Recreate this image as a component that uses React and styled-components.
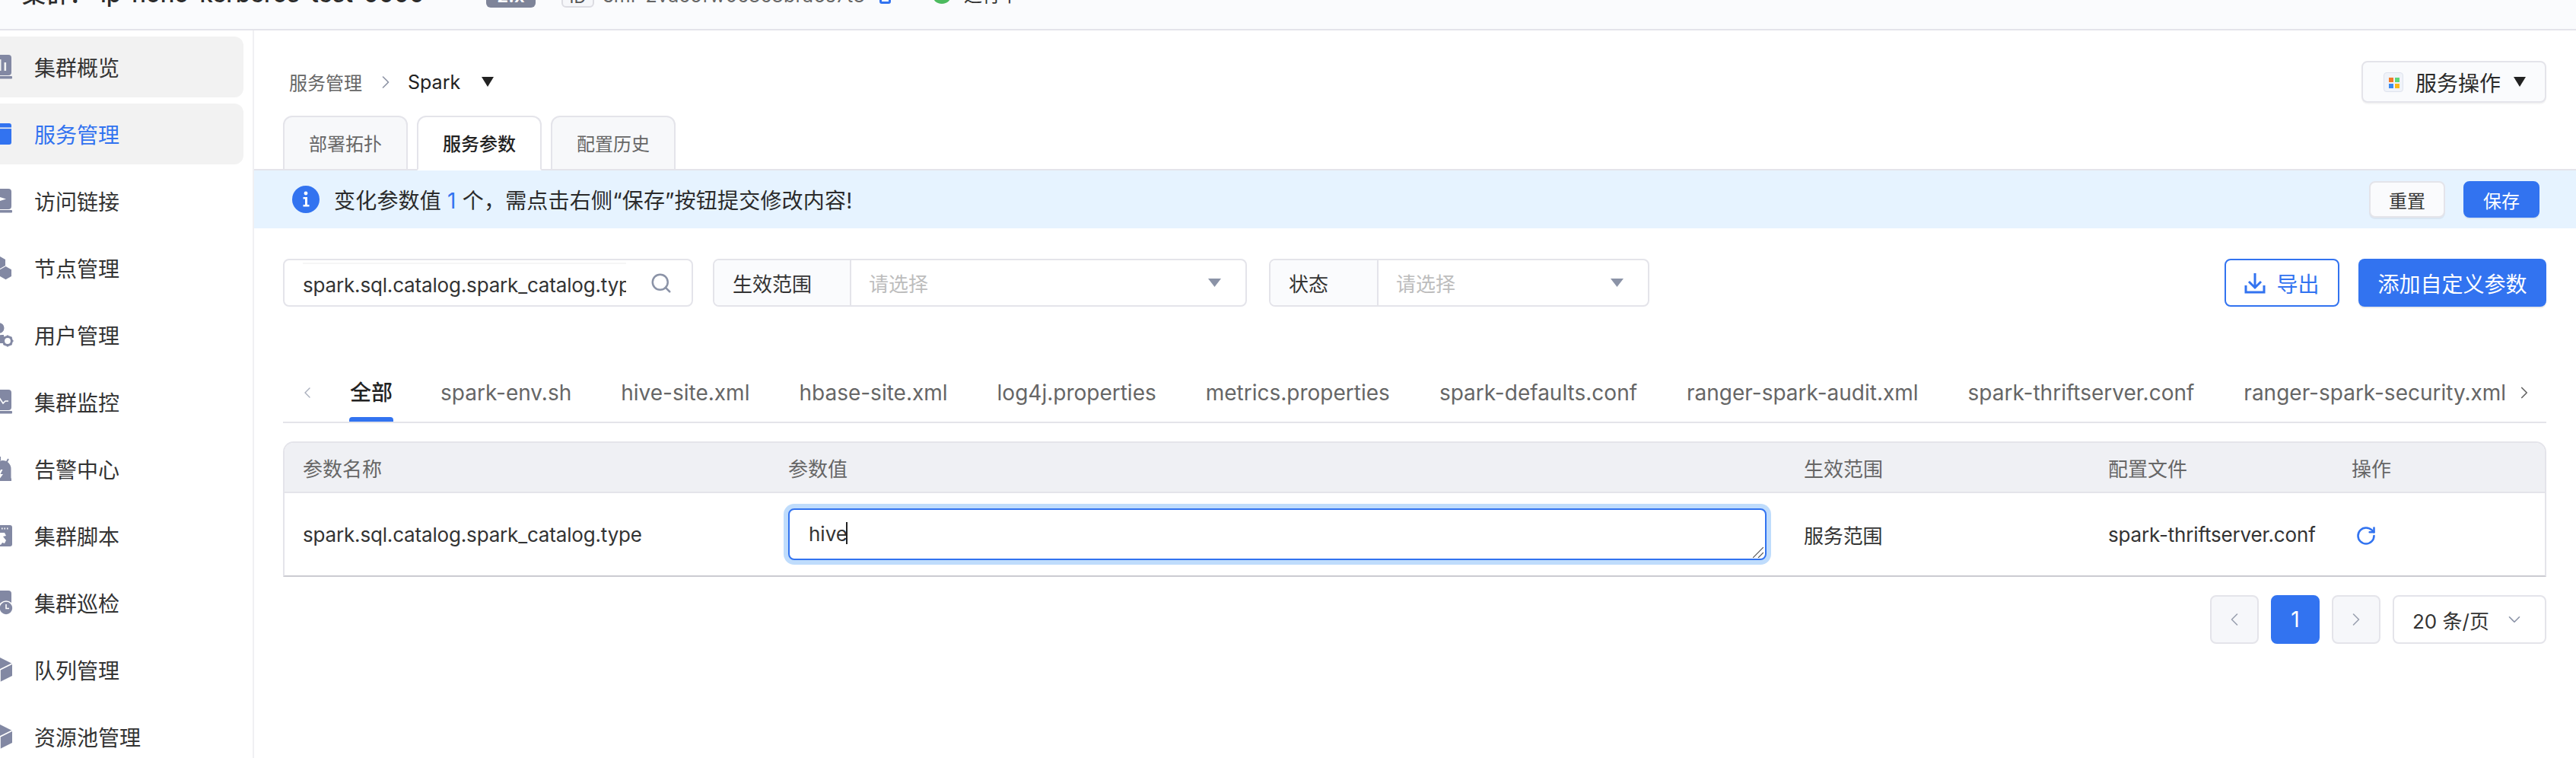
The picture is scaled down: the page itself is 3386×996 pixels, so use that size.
import React from 'react';
import styled, { createGlobalStyle } from 'styled-components';
import { ChevronLeft, ChevronRight, ChevronDown, Search, RotateCw } from 'lucide-react';

const Global = createGlobalStyle`
  html, body { margin: 0; padding: 0; background: #fff; }
  body { font-family: Inter, "Noto Sans CJK SC", sans-serif; color: #333; }
  * { box-sizing: border-box; }
`;

const BLUE = '#3273f0';
const LINE = '#e4e4ea';
const ICON = '#8288a3';

const Page = styled.div`
  width: 3386px; height: 996px; overflow: hidden;
  display: flex; flex-direction: column;
`;
const Header = styled.header`
  flex: none; height: 40px; background: #fafbfd; border-bottom: 2px solid ${LINE};
  display: flex; align-items: flex-end; overflow: hidden; padding-left: 29px;
`;
const Title = styled.div`
  font-size: 31px; font-weight: 500; line-height: 40px; color: #2b2b2b; white-space: nowrap;
  margin-bottom: 26px; width: 610px; flex: none;
`;
const TitleName = styled.span` margin-left: 10px; `;
const VersionTag = styled.div`
  flex: none; width: 65px; height: 40px; background: #7e8499; border-radius: 6px; color: #fff;
  font-size: 24px; font-weight: 600; margin-bottom: 28px;
  display: flex; align-items: flex-end; justify-content: center;
`;
const VersionText = styled.span` line-height: 24px; margin-bottom: 3px; `;
const IdBox = styled.div`
  flex: none; width: 43px; height: 40px; margin-left: 34px; margin-bottom: 28px;
  background: #f6f7fa; border: 2px solid #dcdce2; border-radius: 6px; font-size: 22px;
  display: flex; align-items: flex-end; justify-content: center; color: #555;
`;
const IdLabel = styled.span` line-height: 22px; margin-bottom: 1px; `;
const IdText = styled.div`
  flex: none; width: 345px; margin-left: 11px; margin-bottom: 29px; white-space: nowrap;
  font-size: 25px; line-height: 30px; color: #666; letter-spacing: 0.25px;
`;
const CopyIcon = styled.svg` flex: none; margin-left: 19px; margin-bottom: 33px; `;
const StatusDot = styled.div`
  flex: none; width: 26px; height: 26px; margin-left: 54px; margin-bottom: 33px;
  border-radius: 50%; background: #4cbb5f;
`;
const StatusText = styled.div`
  flex: none; margin-left: 16px; margin-bottom: 29px; font-size: 24px; line-height: 30px; color: #333;
`;

const Body = styled.div` flex: 1; min-height: 0; display: flex; `;
const Sidebar = styled.nav`
  flex: none; width: 334px; border-right: 2px solid #f0f0f3; padding-top: 8px; overflow: hidden;
  display: flex; flex-direction: column; gap: 8px;
`;
const MenuItem = styled.div`
  flex: none; width: 320px; height: 80px; border-radius: 0 12px 12px 0;
  background: ${p => (p.$tinted ? '#f2f2f2' : 'transparent')};
  color: ${p => (p.$active ? BLUE : '#333')};
  display: flex; align-items: center; gap: 29px;
  font-size: 28px; white-space: nowrap;
`;
const MenuGlyph = styled.svg` flex: none; margin-left: -16px; overflow: visible; `;

const Main = styled.main` flex: 1; min-width: 0; display: flex; flex-direction: column; `;
const TopRow = styled.div`
  flex: none; margin-top: 40px; height: 55px; padding: 0 39px 0 46px;
  display: flex; align-items: center; justify-content: space-between;
`;
const Crumbs = styled.div` display: flex; align-items: center; font-size: 24px; `;
const CrumbLink = styled.span` color: #666; `;
const CrumbChevron = styled.span` display: flex; color: #8f95a6; margin-left: 17px; `;
const CrumbCurrent = styled.span` color: #222; margin-left: 15px; font-size: 25px; `;
const Triangle = styled.svg` flex: none; display: block; margin-left: ${p => p.$ml || 0}px; `;
const OpsButton = styled.div`
  width: 243px; height: 55px; padding-left: 27px; background: #fafbfd; border: 2px solid ${LINE};
  border-radius: 8px; box-shadow: 0 2px 0 rgba(0,0,0,.04); display: flex; align-items: center;
  font-size: 28px; color: #2b2b2b;
`;
const OpsTile = styled.span`
  width: 26px; height: 26px; padding: 6px; background: #f0f3f9; border: 1px solid #dfe3ee; border-radius: 4px;
  display: grid; grid-template-columns: 6px 6px; grid-template-rows: 6px 6px; gap: 2px; flex: none;
  margin-right: 16px;
`;
const OpsDot = styled.i` display: block; background: ${p => p.$c}; `;

const TabBar = styled.div`
  flex: none; margin-top: 17px; height: 72px; padding-left: 38px; display: flex; gap: 12px;
  border-bottom: 2px solid ${LINE};
`;
const Tab = styled.div`
  width: 164px; height: 72px; border: 2px solid ${LINE}; border-radius: 12px 12px 0 0;
  background: ${p => (p.$active ? '#fff' : '#f7f8fa')};
  border-bottom-color: ${p => (p.$active ? '#fff' : LINE)};
  color: ${p => (p.$active ? '#222' : '#666')};
  font-size: 24px; font-weight: ${p => (p.$active ? 500 : 400)};
  display: flex; align-items: center; justify-content: center; padding-bottom: 2px;
`;
const Banner = styled.div`
  flex: none; height: 76px; background: #e6f3ff; padding: 0 48px 0 50px;
  display: flex; align-items: center; font-size: 28px; color: #2b2b2b;
`;
const BannerText = styled.div` margin-left: 19px; flex: 1; letter-spacing: 0.2px; `;
const Count = styled.span` color: ${BLUE}; `;
const SmallButton = styled.div`
  width: 100px; height: 48px; margin-left: 24px; border-radius: 8px; font-size: 24px;
  display: flex; align-items: center; justify-content: center;
  background: ${p => (p.$primary ? BLUE : '#fafbfd')};
  color: ${p => (p.$primary ? '#fff' : '#333')};
  border: 2px solid ${p => (p.$primary ? BLUE : LINE)};
  box-shadow: 0 2px 0 rgba(0,0,0,.05);
`;

const Filters = styled.div`
  flex: none; margin-top: 40px; height: 63px; padding: 0 39px 0 38px; display: flex; align-items: stretch;
`;
const SearchBox = styled.div`
  width: 539px; border: 2px solid ${LINE}; border-radius: 8px; display: flex; align-items: flex-start;
  padding-left: 24px;
`;
const SearchInput = styled.input`
  width: 425px; height: 56px; margin-top: 3px; border: 0; border-top: 2px solid #f6f6f6; padding: 0; outline: none;
  font: 26px Inter, "Noto Sans CJK SC", sans-serif; letter-spacing: -0.17px; color: #333; background: transparent;
`;
const SearchIconWrap = styled.span`
  margin-left: 31px; align-self: center; color: #8b93a7; display: flex;
`;
const SelectBox = styled.div`
  width: ${p => p.$w}px; margin-left: ${p => p.$ml}px; border: 2px solid ${LINE}; border-radius: 8px;
  display: flex; align-items: center; font-size: 26px; padding-right: 32px;
`;
const SelectLabel = styled.div`
  width: ${p => p.$w}px; height: 100%; background: #fafbfd; border-right: 2px solid ${LINE};
  border-radius: 6px 0 0 6px; padding-left: 24px; display: flex; align-items: center; color: #333; flex: none;
`;
const Placeholder = styled.div` flex: 1; padding-left: 23px; color: #bdbdbd; `;
const OutlineButton = styled.div`
  width: 151px; margin-left: auto; border: 2px solid ${BLUE}; border-radius: 8px; color: ${BLUE};
  display: flex; align-items: center; justify-content: center; gap: 14px; font-size: 28px;
`;
const PrimaryButton = styled.div`
  width: 247px; margin-left: 25px; background: ${BLUE}; border-radius: 8px; color: #fff;
  display: flex; align-items: center; justify-content: center; font-size: 28px;
  box-shadow: 0 2px 0 rgba(0,0,0,.08);
`;

const FileTabs = styled.div`
  flex: none; margin: 73px 39px 0 38px; height: 80px; border-bottom: 2px solid ${LINE};
  display: flex; align-items: flex-start; padding: 20px 16px 0 20px;
`;
const FileChevron = styled.span`
  flex: none; display: flex; height: 40px; align-items: center; color: ${p => p.$c};
  margin-left: ${p => p.$ml || '0'}; margin-right: ${p => p.$mr || '0'};
`;
const FileTabList = styled.div` display: flex; gap: 65px; `;
const FileTab = styled.div`
  height: 58px; line-height: 40px; font-size: 28px; white-space: nowrap; position: relative;
  margin-right: ${p => (p.$active ? '-2px' : '0')};
  color: ${p => (p.$active ? '#222' : '#666')}; font-weight: ${p => (p.$active ? 500 : 400)};
  ${p => p.$active && `
    &::after { content: ""; position: absolute; left: -1px; right: -1px; bottom: 0; height: 6px;
      background: ${BLUE}; border-radius: 4px 4px 0 0; }
  `}
`;

const Table = styled.div`
  flex: none; margin: 24px 39px 0 38px; border: 2px solid ${LINE}; border-bottom: 2px solid #cbcbd1; border-radius: 14px 14px 0 0;
`;
const TableRow = styled.div`
  display: grid; grid-template-columns: 638px 1335px 400px 320px 1fr; align-items: center; padding-left: 24px;
`;
const HeadRow = styled(TableRow)`
  height: 66px; background: #eff0f4; border-bottom: 2px solid ${LINE}; color: #666; border-radius: 12px 12px 0 0;
  font-size: 26px;
`;
const DataRow = styled(TableRow)` height: 108px; font-size: 26px; color: #333; letter-spacing: -0.17px; `;
const ValueWrap = styled.div` position: relative; width: 1286px; height: 68px; `;
const ValueInput = styled.textarea`
  display: block; width: 1286px; height: 68px; border: 2px solid ${BLUE}; border-radius: 8px;
  box-shadow: 0 0 0 6px #bfdcfc; padding: 17px 25px; outline: none; resize: none;
  font: 26px/30px Inter, "Noto Sans CJK SC", sans-serif; color: #333; background: #fff; caret-color: transparent;
`;
const Caret = styled.i` position: absolute; left: 76px; top: 18px; width: 2px; height: 29px; background: #222; `;
const ResizeGrip = styled.svg` position: absolute; right: 4px; bottom: 3px; `;
const RefreshWrap = styled.span` color: ${BLUE}; display: flex; margin-left: 5px; margin-top: 3px; `;

const Pager = styled.div`
  flex: none; margin: 24px 39px 0 0; height: 64px; display: flex; justify-content: flex-end; gap: 16px;
`;
const PageBtn = styled.div`
  width: 64px; border-radius: 8px; display: flex; align-items: center; justify-content: center; font-size: 28px;
  background: ${p => (p.$current ? BLUE : '#f6f7fa')};
  color: ${p => (p.$current ? '#fff' : '#9aa0b0')};
  border: 2px solid ${p => (p.$current ? BLUE : LINE)};
`;
const PageSize = styled.div`
  width: 202px; border: 2px solid ${LINE}; border-radius: 8px; display: flex; align-items: center;
  justify-content: space-between; padding: 0 27px 0 24px; font-size: 26px; color: #333;
`;
const SizeChevron = styled.span` color: #8b93a7; display: flex; `;

const Screen = ({ children }) => (
  <>
    <rect x="0" y="0" width="31" height="27" rx="4" fill={ICON} />
    <rect x="0" y="28" width="32" height="3.5" rx="1" fill={ICON} />
    {children}
  </>
);

const icons = {
  overview: (
    <Screen>
      <rect x="14.5" y="6" width="3" height="15" fill="#f2f2f2" />
      <rect x="21.5" y="10" width="2.6" height="11" fill="#f2f2f2" />
    </Screen>
  ),
  service: (
    <>
      <rect x="0" y="2" width="31" height="28" rx="3" fill={BLUE} />
      <rect x="0" y="7.5" width="31" height="1.6" fill="#f2f2f2" />
    </>
  ),
  link: (
    <Screen>
      <path d="M9 9 L24 13.5 L9 18 Z" fill="#fff" />
    </Screen>
  ),
  nodes: (
    <>
      <path d="M16 -7 L23 -3 L23 5 L16 9 L9 5 L9 -3 Z" transform="translate(0 8)" fill={ICON} />
      <path d="M23.5 14 L31 18.3 L31 27 L23.5 31.3 L16 27 L16 18.3 Z" fill={ICON} />
      <path d="M8 14 L15 18.3 L15 27 L8 31.3 L1 27 L1 18.3 Z" fill={ICON} />
    </>
  ),
  users: (
    <>
      <circle cx="14.5" cy="7" r="7" fill={ICON} />
      <path d="M0 27 C0 20 8 16 21 16 L21 27 Z" fill={ICON} />
      <circle cx="26" cy="24" r="5.4" fill="none" stroke={ICON} strokeWidth="3" />
      <path d="M26 16.5 V18 M26 30 V31.5 M18.5 24 H20 M32 24 H33.5 M20.7 18.7 L21.8 19.8 M30.2 28.2 L31.3 29.3 M31.3 18.7 L30.2 19.8 M21.8 28.2 L20.7 29.3" stroke={ICON} strokeWidth="2.2" />
    </>
  ),
  monitor: (
    <Screen>
      <path d="M6 16 H13 L16 12 L20 18 L23 15 H27" fill="none" stroke="#fff" strokeWidth="1.6" />
    </Screen>
  ),
  alert: (
    <>
      <path d="M5 30 V16 A11 11 0 0 1 27 16 V30 Z" fill={ICON} transform="translate(3.5 0)" />
      <rect x="0" y="28.5" width="31" height="3.5" fill={ICON} />
      <path d="M17 17 L19.5 17 L16.5 23 L20 23 L15 30 L16 24.5 L13 24.5 Z" fill="#fff" />
      <path d="M16 0 V5 M27 3 L24.5 7.5 M5 3 L7.5 7.5" stroke={ICON} strokeWidth="2" />
    </>
  ),
  script: (
    <>
      <rect x="0" y="2" width="32" height="28" rx="3" fill={ICON} />
      <path d="M18 6.5 H19.5 M21.5 6.5 H23 M25 6.5 H26.5" stroke="#fff" strokeWidth="1.8" />
      <path d="M8 12 H22 L24 16 L20 17 L24 22 L22 26 L19 25 L17 28 L12 25 Z" fill="#fff" />
    </>
  ),
  inspect: (
    <>
      <rect x="0" y="0" width="31" height="27" rx="4" fill={ICON} />
      <circle cx="24" cy="23" r="9" fill={ICON} stroke="#fff" strokeWidth="1.6" />
      <path d="M24 18 V23.5 H28" fill="none" stroke="#fff" strokeWidth="1.6" />
    </>
  ),
  cube: (
    <>
      <path d="M16 0 L32 8 V24 L16 32 L0 24 V8 Z" fill={ICON} />
      <path d="M16 16 L32 8" stroke="#fff" strokeWidth="1.6" />
      <path d="M16 16 V32" stroke="#fff" strokeWidth="1.6" />
    </>
  ),
};

const menu = [
  ['集群概览', 'overview'], ['服务管理', 'service'], ['访问链接', 'link'], ['节点管理', 'nodes'],
  ['用户管理', 'users'], ['集群监控', 'monitor'], ['告警中心', 'alert'], ['集群脚本', 'script'],
  ['集群巡检', 'inspect'], ['队列管理', 'cube'], ['资源池管理', 'cube'],
];

const fileTabs = ['全部', 'spark-env.sh', 'hive-site.xml', 'hbase-site.xml', 'log4j.properties', 'metrics.properties',
  'spark-defaults.conf', 'ranger-spark-audit.xml', 'spark-thriftserver.conf', 'ranger-spark-security.xml'];

const PARAM = 'spark.sql.catalog.spark_catalog.type';

const Down = ({ ml, fill = '#222', w = 16, h = 12 }) => (
  <Triangle $ml={ml} width={w} height={h} viewBox="0 0 16 12" preserveAspectRatio="none">
    <path d="M0 0 H16 L8 12 Z" fill={fill} />
  </Triangle>
);

export default function App() {
  return (
    <Page>
      <Global />
      <Header>
        <Title>集群：<TitleName>ip-hono-kerberos-test-0000</TitleName></Title>
        <VersionTag><VersionText>2.x</VersionText></VersionTag>
        <IdBox><IdLabel>ID</IdLabel></IdBox>
        <IdText>emr-2vac6fw0c8c8bra6s7t8</IdText>
        <CopyIcon width="15" height="22" viewBox="0 0 15 22">
          <rect x="1.5" y="1.5" width="12" height="19" rx="1.5" fill="none" stroke={BLUE} strokeWidth="3" />
        </CopyIcon>
        <StatusDot />
        <StatusText>运行中</StatusText>
      </Header>
      <Body>
        <Sidebar>
          {menu.map(([label, icon], i) => (
            <MenuItem key={label} $tinted={i < 2} $active={i === 1}>
              <MenuGlyph width="32" height="32" viewBox="0 0 32 32">{icons[icon]}</MenuGlyph>
              {label}
            </MenuItem>
          ))}
        </Sidebar>
        <Main>
          <TopRow>
            <Crumbs>
              <CrumbLink>服务管理</CrumbLink>
              <CrumbChevron><ChevronRight size={28} strokeWidth={1.4} /></CrumbChevron>
              <CrumbCurrent>Spark</CrumbCurrent>
              <Down ml={28} w={16} h={13} />
            </Crumbs>
            <OpsButton>
              <OpsTile>
                <OpsDot $c="#f07b2a" /><OpsDot $c="#5fd77a" /><OpsDot $c="#3a8aef" /><OpsDot $c="#fbb81c" />
              </OpsTile>
              服务操作
              <Down ml={17} w={16} h={13} />
            </OpsButton>
          </TopRow>
          <TabBar>
            <Tab>部署拓扑</Tab>
            <Tab $active>服务参数</Tab>
            <Tab>配置历史</Tab>
          </TabBar>
          <Banner>
            <svg width="36" height="36" viewBox="0 0 36 36">
              <circle cx="18" cy="18" r="18" fill={BLUE} />
              <circle cx="18" cy="10" r="2.4" fill="#fff" />
              <path d="M14.5 15 H20 V25 H22.5 V27.5 H14.5 V25 H17 V17.5 H14.5 Z" fill="#fff" />
            </svg>
            <BannerText>变化参数值 <Count>1</Count> 个，需点击右侧“保存”按钮提交修改内容!</BannerText>
            <SmallButton>重置</SmallButton>
            <SmallButton $primary>保存</SmallButton>
          </Banner>
          <Filters>
            <SearchBox>
              <SearchInput readOnly value={PARAM} />
              <SearchIconWrap><Search size={30} strokeWidth={2} /></SearchIconWrap>
            </SearchBox>
            <SelectBox $w={702} $ml={26}>
              <SelectLabel $w={180}>生效范围</SelectLabel>
              <Placeholder>请选择</Placeholder>
              <Down fill="#8b93a7" w={17} h={11} />
            </SelectBox>
            <SelectBox $w={500} $ml={29}>
              <SelectLabel $w={142}>状态</SelectLabel>
              <Placeholder>请选择</Placeholder>
              <Down fill="#8b93a7" w={17} h={11} />
            </SelectBox>
            <OutlineButton>
              <svg width="28" height="28" viewBox="0 0 28 28" fill="none" stroke={BLUE} strokeWidth="3">
                <path d="M14 1 V19 M6 12 L14 20 L22 12" />
                <path d="M2 17 V26 H26 V17" />
              </svg>
              导出
            </OutlineButton>
            <PrimaryButton>添加自定义参数</PrimaryButton>
          </Filters>
          <FileTabs>
            <FileChevron $c="#a8adbb" $mr="44px"><ChevronLeft size={24} strokeWidth={1.4} /></FileChevron>
            <FileTabList>
              {fileTabs.map((t, i) => <FileTab key={t} $active={i === 0}>{t}</FileTab>)}
            </FileTabList>
            <FileChevron $c="#666" $ml="auto"><ChevronRight size={26} strokeWidth={1.6} /></FileChevron>
          </FileTabs>
          <Table>
            <HeadRow>
              <div>参数名称</div><div>参数值</div><div>生效范围</div><div>配置文件</div><div>操作</div>
            </HeadRow>
            <DataRow>
              <div>{PARAM}</div>
              <ValueWrap>
                <ValueInput readOnly value="hive" />
                <Caret />
                <ResizeGrip width="14" height="14" viewBox="0 0 14 14" fill="none" stroke="#555" strokeWidth="1.2">
                  <path d="M0 14 L14 0 M7 14 L14 7" />
                </ResizeGrip>
              </ValueWrap>
              <div>服务范围</div>
              <div>spark-thriftserver.conf</div>
              <RefreshWrap><RotateCw size={28} strokeWidth={2.2} /></RefreshWrap>
            </DataRow>
          </Table>
          <Pager>
            <PageBtn><ChevronLeft size={28} strokeWidth={1.4} /></PageBtn>
            <PageBtn $current>1</PageBtn>
            <PageBtn><ChevronRight size={28} strokeWidth={1.4} /></PageBtn>
            <PageSize>20 条/页<SizeChevron><ChevronDown size={26} strokeWidth={1.5} /></SizeChevron></PageSize>
          </Pager>
        </Main>
      </Body>
    </Page>
  );
}
